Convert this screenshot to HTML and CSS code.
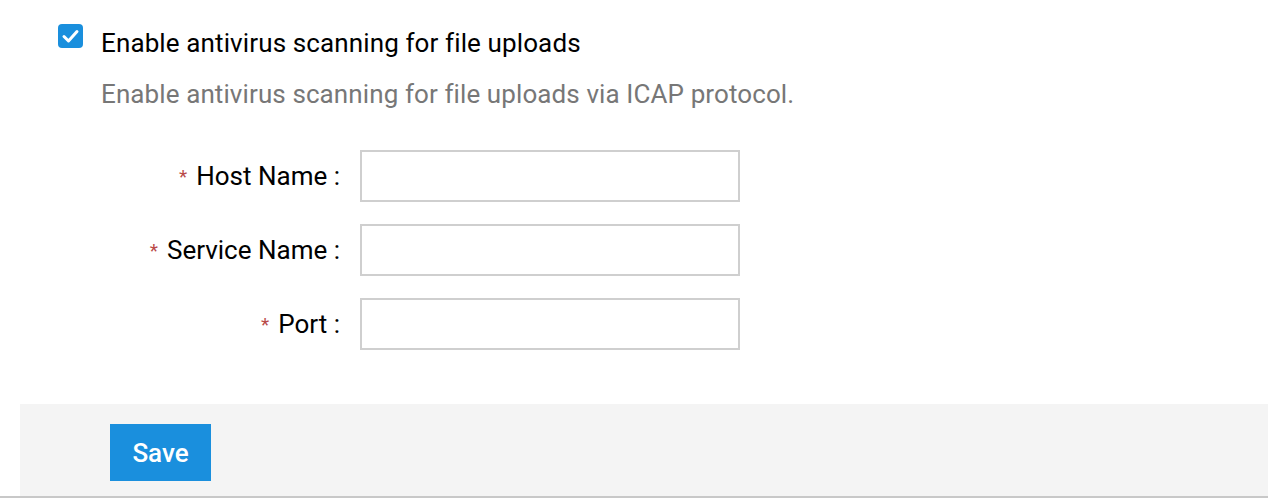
FILE: index.html
```html
<!DOCTYPE html>
<html>
<head>
<meta charset="utf-8">
<link rel="stylesheet" href="styles.css">
</head>
<body>
<div class="page">
  <div class="content">
    <label class="check-row">
      <span class="checkbox">
        <svg width="25" height="24" viewBox="0 0 25 24">
          <rect x="0" y="0" width="25" height="24" rx="4" fill="#1a8fdd"/>
          <path d="M6 12.5 L10.5 17 L19 7.5" fill="none" stroke="#fff" stroke-width="3" stroke-linecap="round" stroke-linejoin="round"/>
        </svg>
      </span>
      <span class="check-label">Enable antivirus scanning for file uploads</span>
    </label>
    <p class="desc">Enable antivirus scanning for file uploads via ICAP protocol.</p>
    <div class="form">
      <div class="field-label"><span class="req">*</span>Host Name :</div>
      <input class="field-input" type="text">
      <div class="field-label"><span class="req">*</span>Service Name :</div>
      <input class="field-input" type="text">
      <div class="field-label"><span class="req">*</span>Port :</div>
      <input class="field-input" type="text">
    </div>
  </div>
  <div class="footer-wrap">
    <div class="footer">
      <button class="save">Save</button>
    </div>
  </div>
</div>
</body>
</html>
```
FILE: styles.css
```css
html, body {
  margin: 0;
  padding: 0;
  background: #fff;
}
body {
  font-family: Roboto, "Liberation Sans", Arial, sans-serif;
  color: #000;
}
.content {
  padding: 24px 0 0 58px;
}
.check-row {
  display: flex;
  align-items: flex-start;
  gap: 18px;
}
.checkbox {
  display: flex;
  width: 25px;
  height: 24px;
}
.check-label {
  font-size: 26px;
  line-height: 30px;
  letter-spacing: 0.12px;
  margin-top: 4px;
  color: #000;
}
.desc {
  margin: 21px 0 0 43px;
  font-size: 26px;
  line-height: 30px;
  letter-spacing: 0.1px;
  color: #777;
}
.form {
  display: grid;
  grid-template-columns: 282px 380px;
  column-gap: 20px;
  row-gap: 22px;
  margin-top: 41px;
  align-items: center;
}
.field-label {
  text-align: right;
  font-size: 26px;
  line-height: 30px;
  color: #000;
}
.req {
  color: #b94a48;
  font-size: 19px;
  margin-right: 9px;
  vertical-align: 2px;
}
.field-input {
  width: 380px;
  height: 52px;
  box-sizing: border-box;
  border: 2px solid #cfcfcf;
  background: #fff;
  margin: 0;
  padding: 0 10px;
  font-size: 20px;
  font-family: inherit;
  display: block;
}
.footer-wrap {
  margin-top: 54px;
  border-bottom: 2px solid #c8c8c8;
}
.footer {
  margin-left: 20px;
  background: #f4f4f4;
  height: 92px;
  box-sizing: border-box;
  padding: 20px 0 0 90px;
}
.save {
  display: block;
  width: 101px;
  height: 57px;
  background: #1a8fdd;
  color: #fff;
  border: none;
  font-family: inherit;
  font-size: 26px;
  font-weight: 500;
  padding: 0;
  cursor: pointer;
}
```
